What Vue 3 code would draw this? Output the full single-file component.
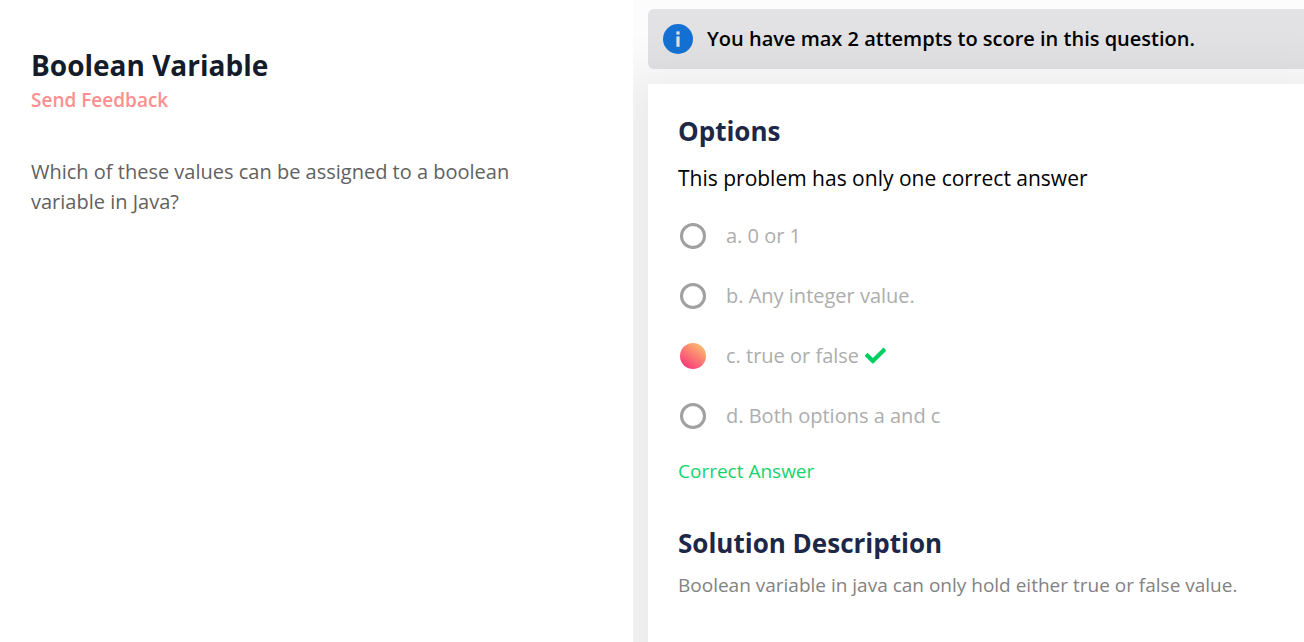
<script setup>
import { ref } from 'vue'

const selected = ref('c')
const correct = 'c'
const options = [
  { id: 'a', text: '0 or 1' },
  { id: 'b', text: 'Any integer value.' },
  { id: 'c', text: 'true or false' },
  { id: 'd', text: 'Both options a and c' },
]
</script>

<template>
  <main class="page">
    <section class="problem">
      <h1 class="title">Boolean Variable</h1>
      <a class="feedback" href="#feedback">Send Feedback</a>
      <p class="question">Which of these values can be assigned to a boolean variable in Java?</p>
    </section>

    <section class="answer">
      <div class="notice" role="status">
        <svg class="info" viewBox="0 0 30 30" aria-hidden="true">
          <circle cx="15" cy="15" r="15" fill="#1471d3" />
          <rect x="13.4" y="7.4" width="3.2" height="3.2" fill="#e0e0e2" />
          <rect x="13.4" y="12.4" width="3.2" height="10.4" fill="#e0e0e2" />
        </svg>
        <span class="notice-text">You have max 2 attempts to score in this question.</span>
      </div>

      <div class="card">
        <h2 class="heading">Options</h2>
        <p id="hint" class="hint">This problem has only one correct answer</p>
        <div class="options" role="radiogroup" aria-labelledby="hint">
          <div v-for="option in options" :key="option.id" class="option">
            <input :id="`option-${option.id}`" v-model="selected" class="radio" type="radio" name="option" :value="option.id" />
            <label class="label" :for="`option-${option.id}`">{{ option.id }}. {{ option.text }}</label>
            <svg v-if="option.id === correct && selected === correct" class="tick" viewBox="0 0 512 512" aria-hidden="true">
              <path fill="#00d061" d="M173.898 419.404l-166.400-166.400c-9.997-9.997-9.997-26.206 0-36.204l36.203-36.204c9.997-9.998 26.207-9.998 36.204 0L192 292.690 432.095 52.596c9.997-9.997 26.207-9.997 36.204 0l36.203 36.204c9.997 9.997 9.997 26.206 0 36.204l-294.400 294.401c-9.998 9.997-26.207 9.997-36.204-.001z" />
            </svg>
          </div>
        </div>
        <p class="result">Correct Answer</p>
        <h2 class="heading">Solution Description</h2>
        <p class="solution">Boolean variable in java can only hold either true or false value.</p>
      </div>
    </section>
  </main>
</template>

<style>
body {
  margin: 0;
  background: #fff;
}
</style>

<style scoped>
.page {
  display: grid;
  grid-template-columns: 633fr 671fr;
  min-height: 100vh;
  overflow: hidden;
  font-family: "Open Sans", "Noto Sans", sans-serif;
}

h1,
h2,
p {
  margin: 0;
}

.problem {
  padding: 45px 60px 30px 31px;
}

.title {
  color: #141b2b;
  font-size: 28px;
  font-weight: 700;
  line-height: 40px;
}

.feedback {
  display: block;
  width: fit-content;
  color: #ff8f8f;
  font-size: 19px;
  font-weight: 600;
  line-height: 30px;
  text-decoration: none;
}

.question {
  margin-top: 42px;
  color: #616161;
  font-size: 20px;
  line-height: 30px;
}

.answer {
  display: flex;
  flex-direction: column;
  gap: 15px;
  padding: 9px 0 0 15px;
  background: #fcfcfc;
  overflow: hidden;
}

.notice {
  display: flex;
  align-items: center;
  gap: 14px;
  height: 60px;
  padding-left: 15px;
  border-radius: 6px 0 0 6px;
  background: #e2e2e4;
}

.info {
  flex: none;
  width: 30px;
  height: 30px;
}

.notice-text {
  color: #000;
  font-size: 20px;
  font-weight: 600;
  line-height: 30px;
}

.card {
  flex: 1;
  padding: 30px;
  background: #fff;
  box-shadow: 0 20px 50px 30px rgba(0, 0, 0, 0.07);
}

.heading {
  color: #1d2747;
  font-size: 26px;
  font-weight: 700;
  line-height: 34px;
}

.hint {
  margin-top: 15px;
  color: #000;
  font-size: 21px;
  line-height: 30px;
}

.options {
  margin-top: 13px;
}

.option {
  display: flex;
  align-items: center;
  height: 60px;
  padding-left: 2px;
}

.radio {
  flex: none;
  appearance: none;
  width: 26px;
  height: 26px;
  margin: 0 20px 0 0;
  border: 3px solid #a0a0a0;
  border-radius: 50%;
}

.radio:checked {
  border: 0;
  background: linear-gradient(35deg, #fa2d7c 5%, #fcc56b 95%);
}

.label {
  color: #adadad;
  font-size: 20px;
  line-height: 30px;
}

.tick {
  width: 21px;
  height: 21px;
  margin-left: 6px;
}

.result {
  margin: 10px 0 40px;
  color: #14d36c;
  font-size: 19px;
  line-height: 30px;
}

.solution {
  margin-top: 10px;
  color: #828282;
  font-size: 19px;
  line-height: 30px;
}
</style>
